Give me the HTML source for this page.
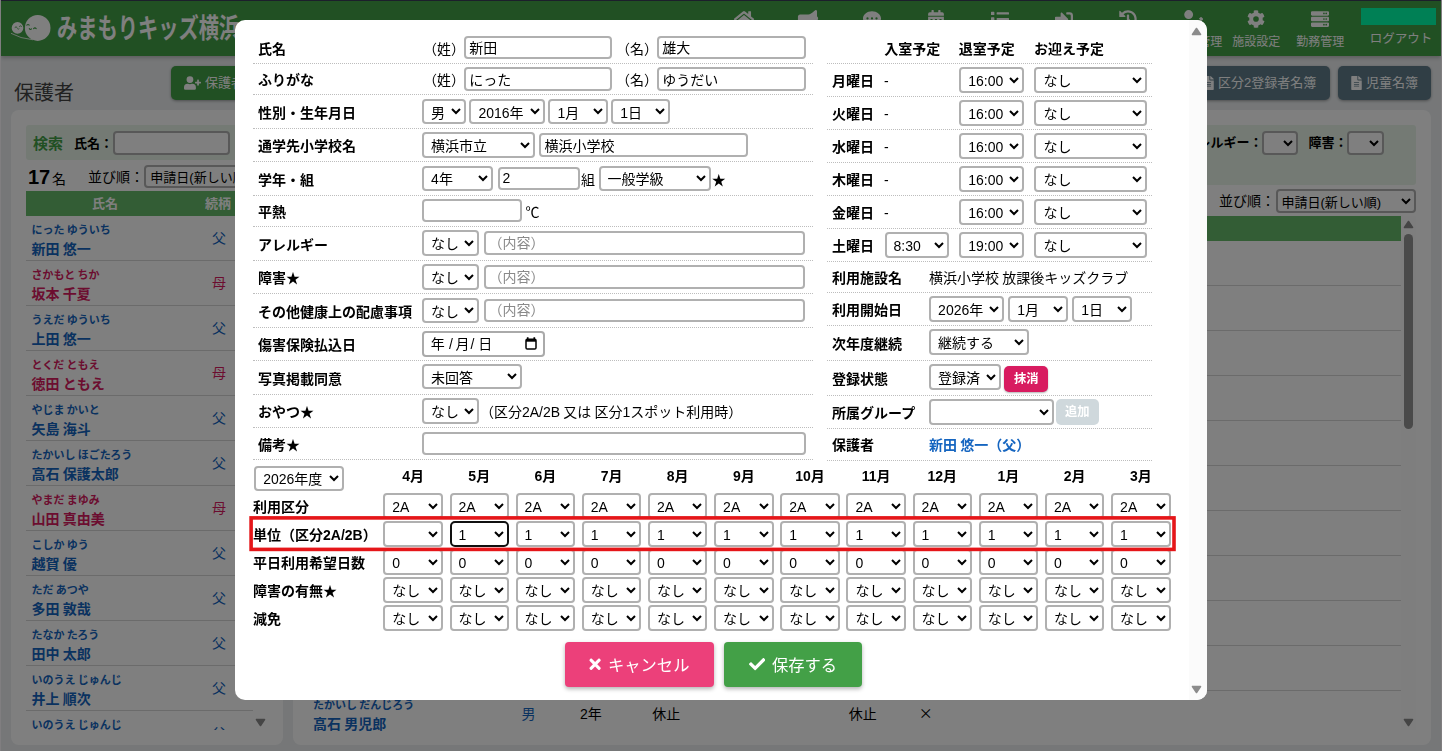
<!DOCTYPE html>
<html lang="ja"><head><meta charset="utf-8"><title>みまもりキッズ横浜</title>
<style>
*{box-sizing:border-box}
html,body{margin:0;padding:0}
body{width:1442px;height:751px;overflow:hidden;position:relative;background:#eceff1;font-family:"Liberation Sans","Noto Sans CJK JP",sans-serif;font-size:14px;color:#000;word-spacing:-0.054em}
.a{position:absolute}
.t{position:absolute;white-space:nowrap;line-height:20px;height:20px;font-size:14px}
.b{font-weight:bold}
select.s{position:absolute;font-family:"Liberation Sans","Noto Sans CJK JP",sans-serif;font-size:14px;border:2px solid #b0b0b0;border-radius:4px;background:#fff;color:#000;padding:2px 0 0 0;margin:0}
input.i{position:absolute;font-family:"Liberation Sans","Noto Sans CJK JP",sans-serif;font-size:14px;border:2px solid #b0b0b0;border-radius:4px;background:#fff;color:#000;padding:0 2px 0 3px;margin:0;outline:none}
input.i::placeholder{color:#8a8a8a;opacity:1}
.dl{position:absolute;height:0;border-top:1px dotted #bdbdbd}
.hdr{position:absolute;left:1px;top:1px;width:1440px;height:55px;background:#43a047;box-shadow:0 2px 4px rgba(0,0,0,.22)}
.nav{position:absolute;top:0;width:64px;height:55px;color:#fff;text-align:center}
.nav svg{position:absolute;left:50%;top:9.700px;transform:translateX(-50%) scale(1.06);transform-origin:50% 0;fill:#fff}
.nav span{position:absolute;left:-10px;right:-10px;top:33.4px;font-size:12px;line-height:18px;white-space:nowrap}
.card{position:absolute;background:#fff;border-radius:8px}
.btn{position:absolute;border-radius:5px;color:#fff;box-shadow:0 1px 3px rgba(0,0,0,.35)}
.row{position:absolute;border-bottom:1px solid #d6d6d6;height:45px}
.f{position:absolute;font-size:11px;font-weight:bold;line-height:14px;white-space:nowrap}
.n{position:absolute;font-size:14px;font-weight:bold;line-height:20px;white-space:nowrap}
.bl{color:#1565c0}
.pk{color:#d81b60}
</style></head><body>
<div id="page" class="a" style="left:0;top:0;width:1442px;height:751px">
<div class="hdr"></div>
<svg class="a" style="left:8px;top:10px" width="48" height="36" viewBox="8 10 48 36"><path d="M11 33.300Q20 38.500 33 39.800" stroke="#fff" stroke-width="1" fill="none" opacity=".8"/><ellipse cx="37.700" cy="27.900" rx="12.800" ry="13" fill="#fff"/><circle cx="17.500" cy="27.900" r="5.800" fill="#fff"/><g stroke="#43a047" stroke-width="1.100" fill="none" stroke-linecap="round"><path d="M26.800 25.200q1.200-1.300 2.400 0"/><path d="M33.600 28.600q1.300-1.400 2.600 0"/><path d="M29.300 28.600q1 1.600 2.200 .3"/><path d="M15 27.300q1-1.200 2 0" stroke-width=".9"/><path d="M19.500 26.300q1-1.200 2 0" stroke-width=".9"/><path d="M17.500 28.800q.8 1 1.600 0" stroke-width=".8"/></g></svg>
<div class="a" style="left:56.500px;top:12px;font-size:27px;line-height:34px;font-weight:bold;color:#fff;white-space:nowrap;transform:scaleX(.75);transform-origin:0 0">みまもりキッズ横浜</div>
<div class="nav" style="left:712.3px"><svg width="20" height="17" viewBox="0 0 576 512"><path d="M280 148L96 300v164a16 16 0 0 0 16 16l112-.3a16 16 0 0 0 16-16V368a16 16 0 0 1 16-16h64a16 16 0 0 1 16 16v95.600a16 16 0 0 0 16 16l112 .3a16 16 0 0 0 16-16V300L296 148a12 12 0 0 0-16 0zM572 251l-84-69V44a12 12 0 0 0-12-12h-56a12 12 0 0 0-12 12v73l-89-74a48 48 0 0 0-61 0L4 251a12 12 0 0 0-2 17l26 31a12 12 0 0 0 17 2L280 107a12 12 0 0 1 16 0l235 194a12 12 0 0 0 17-2l26-31a12 12 0 0 0-2-17z"/></svg><span>ホーム</span></div>
<div class="nav" style="left:776.3px"><svg width="20" height="17" viewBox="0 0 576 512"><path d="M576 240c0-24-13-44-32-55V32c0-9-7-32-32-32a32 32 0 0 0-20 7l-85 68C364 109 310 128 256 128H64c-35 0-64 29-64 64v96c0 35 29 64 64 64h34a247 247 0 0 0-2 32c0 40 9 77 26 111 5 10 16 17 28 17h74c26 0 42-30 26-51-16-21-26-48-26-77 0-11 2-22 4-32h28c54 0 108 19 151 53l85 68a32 32 0 0 0 20 7c25 0 32-23 32-32V295c19-11 32-31 32-55z"/></svg><span>お知らせ</span></div>
<div class="nav" style="left:840.3px"><svg width="18" height="17" viewBox="0 0 512 512"><path d="M256 32C115 32 0 125 0 240c0 50 21 95 57 131-12 50-54 95-55 95a8 8 0 0 0-1 9 8 8 0 0 0 7 5c66 0 116-32 140-51a305 305 0 0 0 108 19c141 0 256-93 256-208S397 32 256 32zM128 272a32 32 0 1 1 0-64 32 32 0 0 1 0 64zm128 0a32 32 0 1 1 0-64 32 32 0 0 1 0 64zm128 0a32 32 0 1 1 0-64 32 32 0 0 1 0 64z"/></svg><span>連絡帳</span></div>
<div class="nav" style="left:904.3px"><svg width="16" height="17" viewBox="0 0 448 512"><path d="M0 464a48 48 0 0 0 48 48h352a48 48 0 0 0 48-48V192H0zM64 268a12 12 0 0 1 12-12h40a12 12 0 0 1 12 12v40a12 12 0 0 1-12 12H76a12 12 0 0 1-12-12zm128 0a12 12 0 0 1 12-12h40a12 12 0 0 1 12 12v40a12 12 0 0 1-12 12h-40a12 12 0 0 1-12-12zm128 0a12 12 0 0 1 12-12h40a12 12 0 0 1 12 12v40a12 12 0 0 1-12 12h-40a12 12 0 0 1-12-12zM400 64h-48V16a16 16 0 0 0-16-16h-32a16 16 0 0 0-16 16v48H160V16a16 16 0 0 0-16-16h-32a16 16 0 0 0-16 16v48H48A48 48 0 0 0 0 112v48h448v-48a48 48 0 0 0-48-48z"/></svg><span>出欠予定</span></div>
<div class="nav" style="left:968.3px"><svg width="18" height="17" viewBox="0 0 512 512"><path d="M80 48H16A16 16 0 0 0 0 64v64a16 16 0 0 0 16 16h64a16 16 0 0 0 16-16V64a16 16 0 0 0-16-16zm0 160H16a16 16 0 0 0-16 16v64a16 16 0 0 0 16 16h64a16 16 0 0 0 16-16v-64a16 16 0 0 0-16-16zm0 160H16a16 16 0 0 0-16 16v64a16 16 0 0 0 16 16h64a16 16 0 0 0 16-16v-64a16 16 0 0 0-16-16zM496 64H176a16 16 0 0 0-16 16v32a16 16 0 0 0 16 16h320a16 16 0 0 0 16-16V80a16 16 0 0 0-16-16zm0 160H176a16 16 0 0 0-16 16v32a16 16 0 0 0 16 16h320a16 16 0 0 0 16-16v-32a16 16 0 0 0-16-16zm0 160H176a16 16 0 0 0-16 16v32a16 16 0 0 0 16 16h320a16 16 0 0 0 16-16v-32a16 16 0 0 0-16-16z"/></svg><span>入退室一覧</span></div>
<div class="nav" style="left:1032.3px"><svg width="18" height="17" viewBox="0 0 512 512"><path d="M416 448h-84a12 12 0 0 1-12-12v-40a12 12 0 0 1 12-12h84a32 32 0 0 0 32-32V160a32 32 0 0 0-32-32h-84a12 12 0 0 1-12-12V76a12 12 0 0 1 12-12h84a96 96 0 0 1 96 96v192a96 96 0 0 1-96 96zm-47-201L201 79c-15-15-41-4-41 17v96H24a24 24 0 0 0-24 24v96a24 24 0 0 0 24 24h136v96c0 21 26 32 41 17l168-168a24 24 0 0 0 0-34z"/></svg><span>入退室</span></div>
<div class="nav" style="left:1096.3px"><svg width="18" height="17" viewBox="0 0 512 512"><path d="M504 255.500C504.300 392 392.800 503.900 256.200 504a247 247 0 0 1-156-55c-11-9-12-26-2-36l11-11c9-9 22-9 32-2A184 184 0 0 0 256 440c102 0 184-82 184-184S358 72 256 72a183 183 0 0 0-127 51l51 51c10 10 3 27-11 27H24a16 16 0 0 1-16-16V40c0-14 17-21 27-11l49 49A247 247 0 0 1 256 8c137 0 248 111 248 247.500zM323 334l10-13a24 24 0 0 0-4-33l-41-32V152a24 24 0 0 0-24-24h-16a24 24 0 0 0-24 24v136l65 51a24 24 0 0 0 34-5z"/></svg><span>利用履歴</span></div>
<div class="nav" style="left:1160.3px"><svg width="21" height="17" viewBox="0 0 640 512"><path d="M224 256a128 128 0 1 0 0-256 128 128 0 0 0 0 256zm90 32h-17a174 174 0 0 1-146 0h-17A134 134 0 0 0 0 422v42a48 48 0 0 0 48 48h274a48 48 0 0 1-2-20l7-61 1-11 8-8 77-77a132 132 0 0 0-99-47zm45 147l-7 61a14 14 0 0 0 16 16l61-7 138-138-70-70zm274-194l-37-37a24 24 0 0 0-34 0l-37 37-4 4 70 70 41-41a24 24 0 0 0 0-34z"/></svg><span>利用者管理</span></div>
<div class="nav" style="left:1224.3px"><svg width="18" height="17" viewBox="0 0 512 512"><path d="M487 316l-43-25a193 193 0 0 0 0-70l43-25a12 12 0 0 0 6-14 249 249 0 0 0-55-95 12 12 0 0 0-15-2l-43 25a189 189 0 0 0-61-35V25a12 12 0 0 0-9-12 251 251 0 0 0-109 0 12 12 0 0 0-9 12v50a195 195 0 0 0-61 35L89 85a12 12 0 0 0-15 2 249 249 0 0 0-55 95 12 12 0 0 0 6 14l43 25a193 193 0 0 0 0 70l-43 25a12 12 0 0 0-6 14 249 249 0 0 0 55 95 12 12 0 0 0 15 2l43-25a189 189 0 0 0 61 35v50a12 12 0 0 0 9 12 251 251 0 0 0 109 0 12 12 0 0 0 9-12v-50a195 195 0 0 0 61-35l43 25a12 12 0 0 0 15-2 249 249 0 0 0 55-95 12 12 0 0 0-6-14zM256 336a80 80 0 1 1 0-160 80 80 0 0 1 0 160z"/></svg><span>施設設定</span></div>
<div class="nav" style="left:1288.3px"><svg width="18" height="17" viewBox="0 0 512 512"><path d="M480 160H32a32 32 0 0 1-32-32V64a32 32 0 0 1 32-32h448a32 32 0 0 1 32 32v64a32 32 0 0 1-32 32zm-48-88a24 24 0 1 0 0 48 24 24 0 0 0 0-48zm-64 0a24 24 0 1 0 0 48 24 24 0 0 0 0-48zm112 248H32a32 32 0 0 1-32-32v-64a32 32 0 0 1 32-32h448a32 32 0 0 1 32 32v64a32 32 0 0 1-32 32zm-48-88a24 24 0 1 0 0 48 24 24 0 0 0 0-48zm-64 0a24 24 0 1 0 0 48 24 24 0 0 0 0-48zm112 248H32a32 32 0 0 1-32-32v-64a32 32 0 0 1 32-32h448a32 32 0 0 1 32 32v64a32 32 0 0 1-32 32zm-48-88a24 24 0 1 0 0 48 24 24 0 0 0 0-48zm-64 0a24 24 0 1 0 0 48 24 24 0 0 0 0-48z"/></svg><span>勤務管理</span></div>
<div class="t" style="left:1369.800px;top:29px;color:#fff;font-size:12.500px">ログアウト</div>
<div class="a" style="left:14px;top:77.500px;font-size:20px;line-height:30px;color:#424242;white-space:nowrap">保護者</div>
<div class="btn" style="left:171px;top:66px;width:110px;height:34px;background:#43a047"><svg class="a" style="left:13px;top:10px;fill:#fff" width="17" height="14" viewBox="0 0 640 512"><path d="M624 208h-64v-64a16 16 0 0 0-16-16h-32a16 16 0 0 0-16 16v64h-64a16 16 0 0 0-16 16v32a16 16 0 0 0 16 16h64v64a16 16 0 0 0 16 16h32a16 16 0 0 0 16-16v-64h64a16 16 0 0 0 16-16v-32a16 16 0 0 0-16-16zm-400 48a128 128 0 1 0 0-256 128 128 0 0 0 0 256zm90 32h-17a174 174 0 0 1-146 0h-17A134 134 0 0 0 0 422v42a48 48 0 0 0 48 48h352a48 48 0 0 0 48-48v-42a134 134 0 0 0-134-134z"/></svg><span class="t" style="left:34px;top:7px;font-size:13px">保護者登録</span></div>
<div class="btn" style="left:1190px;top:66px;width:140px;height:34px;background:#607d8b"><svg class="a" style="left:13px;top:10px;fill:#fff" width="11" height="14" viewBox="0 0 384 512"><path d="M224 136V0H24A24 24 0 0 0 0 24v464a24 24 0 0 0 24 24h336a24 24 0 0 0 24-24V160H248a24 24 0 0 1-24-24zm64 236a12 12 0 0 1-12 12H108a12 12 0 0 1-12-12v-8a12 12 0 0 1 12-12h168a12 12 0 0 1 12 12zm0-64a12 12 0 0 1-12 12H108a12 12 0 0 1-12-12v-8a12 12 0 0 1 12-12h168a12 12 0 0 1 12 12zm0-72v8a12 12 0 0 1-12 12H108a12 12 0 0 1-12-12v-8a12 12 0 0 1 12-12h168a12 12 0 0 1 12 12zm96-114v6H256V0h6a24 24 0 0 1 17 7l98 98a24 24 0 0 1 7 17z"/></svg><span class="t" style="left:28px;top:7px;font-size:13px">区分2登録者名簿</span></div>
<div class="btn" style="left:1338px;top:66px;width:93px;height:34px;background:#607d8b"><svg class="a" style="left:13px;top:10px;fill:#fff" width="11" height="14" viewBox="0 0 384 512"><path d="M224 136V0H24A24 24 0 0 0 0 24v464a24 24 0 0 0 24 24h336a24 24 0 0 0 24-24V160H248a24 24 0 0 1-24-24zm64 236a12 12 0 0 1-12 12H108a12 12 0 0 1-12-12v-8a12 12 0 0 1 12-12h168a12 12 0 0 1 12 12zm0-64a12 12 0 0 1-12 12H108a12 12 0 0 1-12-12v-8a12 12 0 0 1 12-12h168a12 12 0 0 1 12 12zm0-72v8a12 12 0 0 1-12 12H108a12 12 0 0 1-12-12v-8a12 12 0 0 1 12-12h168a12 12 0 0 1 12 12zm96-114v6H256V0h6a24 24 0 0 1 17 7l98 98a24 24 0 0 1 7 17z"/></svg><span class="t" style="left:28px;top:7px;font-size:13px">児童名簿</span></div>
<div class="card" style="left:11px;top:110px;width:271.500px;height:635px"></div>
<div class="a" style="left:26px;top:125px;width:242px;height:35px;background:#e8f5e9;border-radius:3px"></div>
<span class="t b" style="left:33px;top:134.0px;color:#43a047;font-size:15px">検索</span>
<span class="t b" style="left:74px;top:134.0px;font-size:13px">氏名：</span>
<input class="i" type="text" style="left:113px;top:130.6px;width:117px;height:24px;">
<span class="t b" style="left:28px;top:164px;font-size:20px;line-height:26px;height:26px">17</span>
<span class="t " style="left:52px;top:169.0px;">名</span>
<span class="t " style="left:88px;top:167.0px;">並び順：</span>
<select class="s" style="left:144.3px;top:164.7px;width:125px;height:23.6px;padding-left:0px;font-size:13px;"><option>申請日(新しい順)</option></select>
<div class="a" style="left:26px;top:191px;width:227px;height:25px;background:#66bb6a"></div>
<span class="t b" style="left:92px;top:194.0px;color:#fff;font-size:13px">氏名</span>
<span class="t b" style="left:205px;top:194.0px;color:#fff;font-size:13px">続柄</span>
<div class="a" style="left:26px;top:216px;width:227px;height:514px;overflow:hidden">
<div class="row bl" style="left:0;top:-0.5px;width:227px"><span class="f" style="left:5.500px;top:7.300px">にった ゆういち</span><span class="n" style="left:5.500px;top:23px">新田 悠一</span><span class="t" style="left:186px;top:12.500px">父</span></div>
<div class="row pk" style="left:0;top:44.5px;width:227px"><span class="f" style="left:5.500px;top:7.300px">さかもと ちか</span><span class="n" style="left:5.500px;top:23px">坂本 千夏</span><span class="t" style="left:186px;top:12.500px">母</span></div>
<div class="row bl" style="left:0;top:89.5px;width:227px"><span class="f" style="left:5.500px;top:7.300px">うえだ ゆういち</span><span class="n" style="left:5.500px;top:23px">上田 悠一</span><span class="t" style="left:186px;top:12.500px">父</span></div>
<div class="row pk" style="left:0;top:134.5px;width:227px"><span class="f" style="left:5.500px;top:7.300px">とくだ ともえ</span><span class="n" style="left:5.500px;top:23px">徳田 ともえ</span><span class="t" style="left:186px;top:12.500px">母</span></div>
<div class="row bl" style="left:0;top:179.5px;width:227px"><span class="f" style="left:5.500px;top:7.300px">やじま かいと</span><span class="n" style="left:5.500px;top:23px">矢島 海斗</span><span class="t" style="left:186px;top:12.500px">父</span></div>
<div class="row bl" style="left:0;top:224.5px;width:227px"><span class="f" style="left:5.500px;top:7.300px">たかいし ほごたろう</span><span class="n" style="left:5.500px;top:23px">高石 保護太郎</span><span class="t" style="left:186px;top:12.500px">父</span></div>
<div class="row pk" style="left:0;top:269.5px;width:227px"><span class="f" style="left:5.500px;top:7.300px">やまだ まゆみ</span><span class="n" style="left:5.500px;top:23px">山田 真由美</span><span class="t" style="left:186px;top:12.500px">母</span></div>
<div class="row bl" style="left:0;top:314.5px;width:227px"><span class="f" style="left:5.500px;top:7.300px">こしか ゆう</span><span class="n" style="left:5.500px;top:23px">越賀 優</span><span class="t" style="left:186px;top:12.500px">父</span></div>
<div class="row bl" style="left:0;top:359.5px;width:227px"><span class="f" style="left:5.500px;top:7.300px">ただ あつや</span><span class="n" style="left:5.500px;top:23px">多田 敦哉</span><span class="t" style="left:186px;top:12.500px">父</span></div>
<div class="row bl" style="left:0;top:404.5px;width:227px"><span class="f" style="left:5.500px;top:7.300px">たなか たろう</span><span class="n" style="left:5.500px;top:23px">田中 太郎</span><span class="t" style="left:186px;top:12.500px">父</span></div>
<div class="row bl" style="left:0;top:449.5px;width:227px"><span class="f" style="left:5.500px;top:7.300px">いのうえ じゅんじ</span><span class="n" style="left:5.500px;top:23px">井上 順次</span><span class="t" style="left:186px;top:12.500px">父</span></div>
<div class="row bl" style="left:0;top:494.5px;width:227px"><span class="f" style="left:5.500px;top:7.300px">いのうえ じゅんじ</span><span class="n" style="left:5.500px;top:23px">井上 順次</span><span class="t" style="left:186px;top:12.500px">父</span></div>
</div>
<svg class="a" style="left:255px;top:718px" width="11" height="9" viewBox="0 0 11 9"><path d="M1.500 1.500h8L5.500 7.500z" fill="#8a8a8a" stroke="#8a8a8a" stroke-width="1.600" stroke-linejoin="round"/></svg>
<div class="card" style="left:293px;top:110px;width:1138px;height:635px"></div>
<div class="a" style="left:308px;top:125px;width:1108px;height:60px;background:#e8f5e9;border-radius:3px"></div>
<span class="t b" style="left:1184.5px;top:133.0px;font-size:13px">アレルギー：</span>
<select class="s" style="left:1262px;top:131px;width:36px;height:23.5px;padding-left:0px;"><option></option></select>
<span class="t b" style="left:1308.4px;top:133.0px;font-size:13px">障害：</span>
<select class="s" style="left:1347px;top:131px;width:36.5px;height:23.5px;padding-left:0px;"><option></option></select>
<span class="t " style="left:1219px;top:191.0px;">並び順：</span>
<select class="s" style="left:1275.5px;top:189.3px;width:140.2px;height:23.8px;padding-left:0px;font-size:13px;"><option>申請日(新しい順)</option></select>
<div class="a" style="left:308px;top:216px;width:1093px;height:24.600px;background:#66bb6a"></div>
<div class="a" style="left:308px;top:285.1px;width:1093px;height:1px;background:#d6d6d6"></div>
<div class="a" style="left:308px;top:330.1px;width:1093px;height:1px;background:#d6d6d6"></div>
<div class="a" style="left:308px;top:375.1px;width:1093px;height:1px;background:#d6d6d6"></div>
<div class="a" style="left:308px;top:420.1px;width:1093px;height:1px;background:#d6d6d6"></div>
<div class="a" style="left:308px;top:465.1px;width:1093px;height:1px;background:#d6d6d6"></div>
<div class="a" style="left:308px;top:510.1px;width:1093px;height:1px;background:#d6d6d6"></div>
<div class="a" style="left:308px;top:555.1px;width:1093px;height:1px;background:#d6d6d6"></div>
<div class="a" style="left:308px;top:600.1px;width:1093px;height:1px;background:#d6d6d6"></div>
<div class="a" style="left:308px;top:645.1px;width:1093px;height:1px;background:#d6d6d6"></div>
<div class="a" style="left:308px;top:690.1px;width:1093px;height:1px;background:#d6d6d6"></div>
<span class="f bl" style="left:313px;top:698px">たかいし だんじろう</span>
<span class="n bl" style="left:313px;top:713.500px">高石 男児郎</span>
<span class="t bl" style="left:521.5px;top:703.5px;">男</span>
<span class="t " style="left:580px;top:703.5px;">2年</span>
<span class="t " style="left:652.3px;top:703.5px;">休止</span>
<span class="t " style="left:848.8px;top:703.5px;">休止</span>
<span class="t " style="left:918.7px;top:702.0px;font-family:'Noto Sans CJK JP',sans-serif">×</span>
<div class="a" style="left:1401px;top:216px;width:15px;height:514px;background:#fdfdfd"></div>
<svg class="a" style="left:1403px;top:220px" width="11" height="9" viewBox="0 0 11 9"><path d="M1.500 7.500h8L5.500 1.500z" fill="#8a8a8a" stroke="#8a8a8a" stroke-width="1.600" stroke-linejoin="round"/></svg>
<div class="a" style="left:1404px;top:234px;width:9px;height:195px;border-radius:4.500px;background:#959595"></div>
<svg class="a" style="left:1403px;top:718px" width="11" height="9" viewBox="0 0 11 9"><path d="M1.500 1.500h8L5.500 7.500z" fill="#8a8a8a" stroke="#8a8a8a" stroke-width="1.600" stroke-linejoin="round"/></svg>
</div>
<div class="a" style="left:0;top:0;width:1442px;height:751px;background:rgba(0,0,0,.5)"></div>
<div class="a" style="left:1361px;top:8px;width:75px;height:17px;background:#008055"></div>
<div id="modal" class="a" style="left:0;top:0;width:1442px;height:751px;will-change:transform">
<div class="a" style="left:235px;top:20px;width:972px;height:680px;background:#fff;border-radius:10px"></div>
<div class="a" style="left:1189px;top:20px;width:18px;height:680px;background:#fbfbfb;border-radius:0 10px 10px 0"></div>
<svg class="a" style="left:1191px;top:27px" width="11" height="9" viewBox="0 0 11 9"><path d="M1.500 7.500h8L5.500 1.500z" fill="#8c8c8c" stroke="#8c8c8c" stroke-width="1.600" stroke-linejoin="round"/></svg>
<svg class="a" style="left:1191px;top:685px" width="11" height="9" viewBox="0 0 11 9"><path d="M1.500 1.500h8L5.500 7.500z" fill="#8c8c8c" stroke="#8c8c8c" stroke-width="1.600" stroke-linejoin="round"/></svg>
<div class="dl" style="left:253px;top:63px;width:560px"></div>
<div class="dl" style="left:253px;top:94px;width:560px"></div>
<div class="dl" style="left:253px;top:128px;width:560px"></div>
<div class="dl" style="left:253px;top:161px;width:560px"></div>
<div class="dl" style="left:253px;top:195px;width:560px"></div>
<div class="dl" style="left:253px;top:226px;width:560px"></div>
<div class="dl" style="left:253px;top:260px;width:560px"></div>
<div class="dl" style="left:253px;top:293px;width:560px"></div>
<div class="dl" style="left:253px;top:327px;width:560px"></div>
<div class="dl" style="left:253px;top:360px;width:560px"></div>
<div class="dl" style="left:253px;top:394px;width:560px"></div>
<div class="dl" style="left:253px;top:427px;width:560px"></div>
<div class="dl" style="left:253px;top:459px;width:560px"></div>
<span class="t b" style="left:258px;top:38.8px;">氏名</span>
<span class="t b" style="left:258px;top:70.4px;">ふりがな</span>
<span class="t b" style="left:258px;top:102.9px;">性別・生年月日</span>
<span class="t b" style="left:258px;top:136.3px;">通学先小学校名</span>
<span class="t b" style="left:258px;top:169.8px;">学年・組</span>
<span class="t b" style="left:258px;top:202.1px;">平熱</span>
<span class="t b" style="left:258px;top:234.6px;">アレルギー</span>
<span class="t b" style="left:258px;top:268.4px;">障害★</span>
<span class="t b" style="left:258px;top:301.9px;">その他健康上の配慮事項</span>
<span class="t b" style="left:258px;top:335.2px;">傷害保険払込日</span>
<span class="t b" style="left:258px;top:368.8px;">写真掲載同意</span>
<span class="t b" style="left:258px;top:402.2px;">おやつ★</span>
<span class="t b" style="left:258px;top:434.7px;">備考★</span>
<span class="t " style="left:423px;top:38.8px;">（姓）</span>
<input class="i" type="text" style="left:464.2px;top:35.6px;width:147.6px;height:23.6px;" value="新田">
<span class="t " style="left:616px;top:38.8px;">（名）</span>
<input class="i" type="text" style="left:657.3px;top:35.6px;width:148.6px;height:23.6px;" value="雄大">
<span class="t " style="left:423px;top:70.4px;">（姓）</span>
<input class="i" type="text" style="left:464.2px;top:67.2px;width:147.6px;height:23.6px;" value="にった">
<span class="t " style="left:616px;top:70.4px;">（名）</span>
<input class="i" type="text" style="left:657.3px;top:67.2px;width:148.6px;height:23.6px;" value="ゆうだい">
<select class="s" style="left:422.1px;top:98.7px;width:43.6px;height:25.7px;padding-left:3px;"><option>男</option></select>
<select class="s" style="left:469.4px;top:98.7px;width:75.2px;height:25.7px;padding-left:3px;"><option>2016年</option></select>
<select class="s" style="left:548.4px;top:98.7px;width:59.2px;height:25.7px;padding-left:3px;"><option>1月</option></select>
<select class="s" style="left:611.3px;top:98.7px;width:59.2px;height:25.7px;padding-left:3px;"><option>1日</option></select>
<select class="s" style="left:422.1px;top:132.1px;width:112.5px;height:25.7px;padding-left:3px;"><option>横浜市立</option></select>
<input class="i" type="text" style="left:539.4px;top:133.2px;width:208.6px;height:23.6px;" value="横浜小学校">
<select class="s" style="left:422.1px;top:165.6px;width:71.3px;height:25.7px;padding-left:3px;"><option>4年</option></select>
<input class="i" type="text" style="left:497.5px;top:166.6px;width:82.8px;height:23.6px;" value="2">
<span class="t " style="left:581px;top:169.8px;">組</span>
<select class="s" style="left:598.6px;top:165.6px;width:112.9px;height:25.7px;padding-left:3px;"><option>一般学級</option></select>
<span class="t " style="left:711.7px;top:169.8px;">★</span>
<input class="i" type="text" style="left:422.3px;top:198.9px;width:100.2px;height:23.6px;">
<span class="t " style="left:525.5px;top:202.1px;">℃</span>
<select class="s" style="left:422.1px;top:230.4px;width:57px;height:25.7px;padding-left:3px;"><option>なし</option></select>
<input class="i" type="text" style="left:483.5px;top:231.4px;width:321px;height:23.6px;" placeholder="（内容）">
<select class="s" style="left:422.1px;top:264.2px;width:57px;height:25.7px;padding-left:3px;"><option>なし</option></select>
<input class="i" type="text" style="left:483.5px;top:265.2px;width:321px;height:23.6px;" placeholder="（内容）">
<select class="s" style="left:422.1px;top:297.7px;width:57px;height:25.7px;padding-left:3px;"><option>なし</option></select>
<input class="i" type="text" style="left:483.5px;top:298.7px;width:321px;height:23.6px;" placeholder="（内容）">
<div class="a" style="left:422.300px;top:331.300px;width:122.300px;height:25.300px;border:2px solid #aaa;border-radius:4px;background:#fff"><span class="t" style="left:6.500px;top:0.700px">年</span><span class="t" style="left:24.800px;top:0.700px">/</span><span class="t" style="left:31.300px;top:0.700px">月</span><span class="t" style="left:46.300px;top:0.700px">/</span><span class="t" style="left:54px;top:0.700px">日</span><svg class="a" style="left:101px;top:3.700px" width="12" height="13" viewBox="0 0 12 13"><path d="M2.700 0.300v2.500M9.300 0.300v2.500" stroke="#000" stroke-width="1.700"/><rect x="1" y="2.300" width="10" height="9.700" rx="1.300" fill="none" stroke="#000" stroke-width="1.500"/><rect x="1" y="2.300" width="10" height="2.400" fill="#000"/></svg></div>
<select class="s" style="left:422.1px;top:364.3px;width:99.6px;height:25.2px;padding-left:3px;"><option>未回答</option></select>
<select class="s" style="left:422.1px;top:398.0px;width:57px;height:25.7px;padding-left:3px;"><option>なし</option></select>
<span class="t " style="left:480px;top:402.2px;">（区分2A/2B 又は 区分1スポット利用時）</span>
<input class="i" type="text" style="left:422.3px;top:431.6px;width:384px;height:23.6px;">
<div class="dl" style="left:827px;top:63px;width:325px"></div>
<div class="dl" style="left:827px;top:96px;width:325px"></div>
<div class="dl" style="left:827px;top:129px;width:325px"></div>
<div class="dl" style="left:827px;top:162px;width:325px"></div>
<div class="dl" style="left:827px;top:195px;width:325px"></div>
<div class="dl" style="left:827px;top:228px;width:325px"></div>
<div class="dl" style="left:827px;top:261px;width:325px"></div>
<div class="dl" style="left:827px;top:292px;width:325px"></div>
<div class="dl" style="left:827px;top:325px;width:325px"></div>
<div class="dl" style="left:827px;top:360px;width:325px"></div>
<div class="dl" style="left:827px;top:395px;width:325px"></div>
<div class="dl" style="left:827px;top:428px;width:325px"></div>
<div class="dl" style="left:827px;top:460px;width:325px"></div>
<span class="t b" style="left:884.3px;top:38.8px;">入室予定</span>
<span class="t b" style="left:958.7px;top:38.8px;">退室予定</span>
<span class="t b" style="left:1034px;top:38.8px;">お迎え予定</span>
<span class="t b" style="left:832px;top:70.9px;">月曜日</span>
<span class="t " style="left:884px;top:70.9px;">-</span>
<select class="s" style="left:959.2px;top:67.3px;width:64.4px;height:25.7px;padding-left:3px;"><option>16:00</option></select>
<select class="s" style="left:1034.4px;top:67.3px;width:112.3px;height:25.7px;padding-left:3px;"><option>なし</option></select>
<span class="t b" style="left:832px;top:103.9px;">火曜日</span>
<span class="t " style="left:884px;top:103.9px;">-</span>
<select class="s" style="left:959.2px;top:100.3px;width:64.4px;height:25.7px;padding-left:3px;"><option>16:00</option></select>
<select class="s" style="left:1034.4px;top:100.3px;width:112.3px;height:25.7px;padding-left:3px;"><option>なし</option></select>
<span class="t b" style="left:832px;top:136.9px;">水曜日</span>
<span class="t " style="left:884px;top:136.9px;">-</span>
<select class="s" style="left:959.2px;top:133.3px;width:64.4px;height:25.7px;padding-left:3px;"><option>16:00</option></select>
<select class="s" style="left:1034.4px;top:133.3px;width:112.3px;height:25.7px;padding-left:3px;"><option>なし</option></select>
<span class="t b" style="left:832px;top:169.9px;">木曜日</span>
<span class="t " style="left:884px;top:169.9px;">-</span>
<select class="s" style="left:959.2px;top:166.4px;width:64.4px;height:25.7px;padding-left:3px;"><option>16:00</option></select>
<select class="s" style="left:1034.4px;top:166.4px;width:112.3px;height:25.7px;padding-left:3px;"><option>なし</option></select>
<span class="t b" style="left:832px;top:202.9px;">金曜日</span>
<span class="t " style="left:884px;top:202.9px;">-</span>
<select class="s" style="left:959.2px;top:199.4px;width:64.4px;height:25.7px;padding-left:3px;"><option>16:00</option></select>
<select class="s" style="left:1034.4px;top:199.4px;width:112.3px;height:25.7px;padding-left:3px;"><option>なし</option></select>
<span class="t b" style="left:832px;top:235.9px;">土曜日</span>
<select class="s" style="left:884.5px;top:232.4px;width:64.2px;height:25.7px;padding-left:3px;"><option>8:30</option></select>
<select class="s" style="left:959.2px;top:232.4px;width:64.4px;height:25.7px;padding-left:3px;"><option>19:00</option></select>
<select class="s" style="left:1034.4px;top:232.4px;width:112.3px;height:25.7px;padding-left:3px;"><option>なし</option></select>
<span class="t b" style="left:832px;top:267.8px;">利用施設名</span>
<span class="t " style="left:929px;top:267.8px;">横浜小学校 放課後キッズクラブ</span>
<span class="t b" style="left:832px;top:299.8px;">利用開始日</span>
<select class="s" style="left:929.1px;top:296.1px;width:75.2px;height:25.7px;padding-left:3px;"><option>2026年</option></select>
<select class="s" style="left:1008.2px;top:296.1px;width:59.8px;height:25.7px;padding-left:3px;"><option>1月</option></select>
<select class="s" style="left:1072.2px;top:296.1px;width:59.8px;height:25.7px;padding-left:3px;"><option>1日</option></select>
<span class="t b" style="left:832px;top:333.8px;">次年度継続</span>
<select class="s" style="left:929.1px;top:329px;width:99.6px;height:25.7px;padding-left:3px;"><option>継続する</option></select>
<span class="t b" style="left:832px;top:368.7px;">登録状態</span>
<select class="s" style="left:929.1px;top:364.2px;width:71.5px;height:25.7px;padding-left:3px;"><option>登録済</option></select>
<div class="a" style="left:1004.200px;top:366px;width:43.700px;height:26px;background:#d81b60;border-radius:5px;box-shadow:0 1px 2px rgba(0,0,0,.3)"><span class="t b" style="left:9.800px;top:3.300px;color:#fff;font-size:12.300px">抹消</span></div>
<span class="t b" style="left:832px;top:402.8px;">所属グループ</span>
<select class="s" style="left:929.1px;top:399.3px;width:125.2px;height:25.7px;padding-left:3px;"><option></option></select>
<div class="a" style="left:1055.500px;top:399.300px;width:43.500px;height:25.500px;background:#cfd8dc;border-radius:5px"><span class="t b" style="left:9.500px;top:3px;color:#fff;font-size:12.300px">追加</span></div>
<span class="t b" style="left:832px;top:435.3px;">保護者</span>
<span class="t b" style="left:929px;top:435.3px;color:#1565c0">新田 悠一（父）</span>
<select class="s" style="left:254.2px;top:466px;width:89.6px;height:24.5px;padding-left:3px;"><option>2026年度</option></select>
<span class="t b" style="left:383.3px;top:466px;width:59.500px;text-align:center">4月</span>
<select class="s" style="left:383.3px;top:493.2px;width:59.5px;height:25.7px;padding-left:3px;"><option>2A</option></select>
<select class="s" style="left:383.3px;top:521.2px;width:59.5px;height:25.7px;padding-left:3px;"><option></option></select>
<select class="s" style="left:383.3px;top:549.2px;width:59.5px;height:25.7px;padding-left:3px;"><option>0</option></select>
<select class="s" style="left:383.3px;top:577.2px;width:59.5px;height:25.7px;padding-left:3px;"><option>なし</option></select>
<select class="s" style="left:383.3px;top:605.2px;width:59.5px;height:25.7px;padding-left:3px;"><option>なし</option></select>
<span class="t b" style="left:449.5px;top:466px;width:59.500px;text-align:center">5月</span>
<select class="s" style="left:449.5px;top:493.2px;width:59.5px;height:25.7px;padding-left:3px;"><option>2A</option></select>
<select class="s" style="left:449.5px;top:521.2px;width:59.5px;height:25.7px;padding-left:3px;border-color:#101010;border-radius:5px;"><option>1</option></select>
<select class="s" style="left:449.5px;top:549.2px;width:59.5px;height:25.7px;padding-left:3px;"><option>0</option></select>
<select class="s" style="left:449.5px;top:577.2px;width:59.5px;height:25.7px;padding-left:3px;"><option>なし</option></select>
<select class="s" style="left:449.5px;top:605.2px;width:59.5px;height:25.7px;padding-left:3px;"><option>なし</option></select>
<span class="t b" style="left:515.6px;top:466px;width:59.500px;text-align:center">6月</span>
<select class="s" style="left:515.6px;top:493.2px;width:59.5px;height:25.7px;padding-left:3px;"><option>2A</option></select>
<select class="s" style="left:515.6px;top:521.2px;width:59.5px;height:25.7px;padding-left:3px;"><option>1</option></select>
<select class="s" style="left:515.6px;top:549.2px;width:59.5px;height:25.7px;padding-left:3px;"><option>0</option></select>
<select class="s" style="left:515.6px;top:577.2px;width:59.5px;height:25.7px;padding-left:3px;"><option>なし</option></select>
<select class="s" style="left:515.6px;top:605.2px;width:59.5px;height:25.7px;padding-left:3px;"><option>なし</option></select>
<span class="t b" style="left:581.8px;top:466px;width:59.500px;text-align:center">7月</span>
<select class="s" style="left:581.8px;top:493.2px;width:59.5px;height:25.7px;padding-left:3px;"><option>2A</option></select>
<select class="s" style="left:581.8px;top:521.2px;width:59.5px;height:25.7px;padding-left:3px;"><option>1</option></select>
<select class="s" style="left:581.8px;top:549.2px;width:59.5px;height:25.7px;padding-left:3px;"><option>0</option></select>
<select class="s" style="left:581.8px;top:577.2px;width:59.5px;height:25.7px;padding-left:3px;"><option>なし</option></select>
<select class="s" style="left:581.8px;top:605.2px;width:59.5px;height:25.7px;padding-left:3px;"><option>なし</option></select>
<span class="t b" style="left:647.9px;top:466px;width:59.500px;text-align:center">8月</span>
<select class="s" style="left:647.9px;top:493.2px;width:59.5px;height:25.7px;padding-left:3px;"><option>2A</option></select>
<select class="s" style="left:647.9px;top:521.2px;width:59.5px;height:25.7px;padding-left:3px;"><option>1</option></select>
<select class="s" style="left:647.9px;top:549.2px;width:59.5px;height:25.7px;padding-left:3px;"><option>0</option></select>
<select class="s" style="left:647.9px;top:577.2px;width:59.5px;height:25.7px;padding-left:3px;"><option>なし</option></select>
<select class="s" style="left:647.9px;top:605.2px;width:59.5px;height:25.7px;padding-left:3px;"><option>なし</option></select>
<span class="t b" style="left:714.1px;top:466px;width:59.500px;text-align:center">9月</span>
<select class="s" style="left:714.1px;top:493.2px;width:59.5px;height:25.7px;padding-left:3px;"><option>2A</option></select>
<select class="s" style="left:714.1px;top:521.2px;width:59.5px;height:25.7px;padding-left:3px;"><option>1</option></select>
<select class="s" style="left:714.1px;top:549.2px;width:59.5px;height:25.7px;padding-left:3px;"><option>0</option></select>
<select class="s" style="left:714.1px;top:577.2px;width:59.5px;height:25.7px;padding-left:3px;"><option>なし</option></select>
<select class="s" style="left:714.1px;top:605.2px;width:59.5px;height:25.7px;padding-left:3px;"><option>なし</option></select>
<span class="t b" style="left:780.3px;top:466px;width:59.500px;text-align:center">10月</span>
<select class="s" style="left:780.3px;top:493.2px;width:59.5px;height:25.7px;padding-left:3px;"><option>2A</option></select>
<select class="s" style="left:780.3px;top:521.2px;width:59.5px;height:25.7px;padding-left:3px;"><option>1</option></select>
<select class="s" style="left:780.3px;top:549.2px;width:59.5px;height:25.7px;padding-left:3px;"><option>0</option></select>
<select class="s" style="left:780.3px;top:577.2px;width:59.5px;height:25.7px;padding-left:3px;"><option>なし</option></select>
<select class="s" style="left:780.3px;top:605.2px;width:59.5px;height:25.7px;padding-left:3px;"><option>なし</option></select>
<span class="t b" style="left:846.4px;top:466px;width:59.500px;text-align:center">11月</span>
<select class="s" style="left:846.4px;top:493.2px;width:59.5px;height:25.7px;padding-left:3px;"><option>2A</option></select>
<select class="s" style="left:846.4px;top:521.2px;width:59.5px;height:25.7px;padding-left:3px;"><option>1</option></select>
<select class="s" style="left:846.4px;top:549.2px;width:59.5px;height:25.7px;padding-left:3px;"><option>0</option></select>
<select class="s" style="left:846.4px;top:577.2px;width:59.5px;height:25.7px;padding-left:3px;"><option>なし</option></select>
<select class="s" style="left:846.4px;top:605.2px;width:59.5px;height:25.7px;padding-left:3px;"><option>なし</option></select>
<span class="t b" style="left:912.6px;top:466px;width:59.500px;text-align:center">12月</span>
<select class="s" style="left:912.6px;top:493.2px;width:59.5px;height:25.7px;padding-left:3px;"><option>2A</option></select>
<select class="s" style="left:912.6px;top:521.2px;width:59.5px;height:25.7px;padding-left:3px;"><option>1</option></select>
<select class="s" style="left:912.6px;top:549.2px;width:59.5px;height:25.7px;padding-left:3px;"><option>0</option></select>
<select class="s" style="left:912.6px;top:577.2px;width:59.5px;height:25.7px;padding-left:3px;"><option>なし</option></select>
<select class="s" style="left:912.6px;top:605.2px;width:59.5px;height:25.7px;padding-left:3px;"><option>なし</option></select>
<span class="t b" style="left:978.7px;top:466px;width:59.500px;text-align:center">1月</span>
<select class="s" style="left:978.7px;top:493.2px;width:59.5px;height:25.7px;padding-left:3px;"><option>2A</option></select>
<select class="s" style="left:978.7px;top:521.2px;width:59.5px;height:25.7px;padding-left:3px;"><option>1</option></select>
<select class="s" style="left:978.7px;top:549.2px;width:59.5px;height:25.7px;padding-left:3px;"><option>0</option></select>
<select class="s" style="left:978.7px;top:577.2px;width:59.5px;height:25.7px;padding-left:3px;"><option>なし</option></select>
<select class="s" style="left:978.7px;top:605.2px;width:59.5px;height:25.7px;padding-left:3px;"><option>なし</option></select>
<span class="t b" style="left:1044.9px;top:466px;width:59.500px;text-align:center">2月</span>
<select class="s" style="left:1044.9px;top:493.2px;width:59.5px;height:25.7px;padding-left:3px;"><option>2A</option></select>
<select class="s" style="left:1044.9px;top:521.2px;width:59.5px;height:25.7px;padding-left:3px;"><option>1</option></select>
<select class="s" style="left:1044.9px;top:549.2px;width:59.5px;height:25.7px;padding-left:3px;"><option>0</option></select>
<select class="s" style="left:1044.9px;top:577.2px;width:59.5px;height:25.7px;padding-left:3px;"><option>なし</option></select>
<select class="s" style="left:1044.9px;top:605.2px;width:59.5px;height:25.7px;padding-left:3px;"><option>なし</option></select>
<span class="t b" style="left:1111.1px;top:466px;width:59.500px;text-align:center">3月</span>
<select class="s" style="left:1111.1px;top:493.2px;width:59.5px;height:25.7px;padding-left:3px;"><option>2A</option></select>
<select class="s" style="left:1111.1px;top:521.2px;width:59.5px;height:25.7px;padding-left:3px;"><option>1</option></select>
<select class="s" style="left:1111.1px;top:549.2px;width:59.5px;height:25.7px;padding-left:3px;"><option>0</option></select>
<select class="s" style="left:1111.1px;top:577.2px;width:59.5px;height:25.7px;padding-left:3px;"><option>なし</option></select>
<select class="s" style="left:1111.1px;top:605.2px;width:59.5px;height:25.7px;padding-left:3px;"><option>なし</option></select>
<span class="t b" style="left:253px;top:497.0px;">利用区分</span>
<span class="t b" style="left:253px;top:525.0px;">単位（区分2A/2B）</span>
<span class="t b" style="left:253px;top:553.0px;">平日利用希望日数</span>
<span class="t b" style="left:253px;top:581.0px;">障害の有無★</span>
<span class="t b" style="left:253px;top:609.0px;">減免</span>
<svg class="a" style="left:245px;top:512px" width="940" height="44" viewBox="245 512 940 44"><rect x="251.100" y="517.900" width="922.900" height="31.500" fill="none" stroke="#e51619" stroke-width="3.600"/></svg>
<div class="a" style="left:565px;top:642px;width:149px;height:44.500px;background:#ec407a;border-radius:4px;box-shadow:0 2px 4px rgba(0,0,0,.3);color:#fff"><svg class="a" style="left:24.400px;top:14.400px;fill:#fff" width="12.200" height="16.500" viewBox="0 0 352 512"><path d="M242.720 256l100.070-100.070c12.280-12.280 12.280-32.190 0-44.480l-22.240-22.240c-12.280-12.280-32.190-12.280-44.480 0L176 189.280 75.930 89.210c-12.280-12.280-32.190-12.280-44.480 0L9.210 111.450c-12.280 12.280-12.280 32.190 0 44.480L109.280 256 9.210 356.070c-12.280 12.280-12.280 32.190 0 44.480l22.240 22.240c12.280 12.280 32.200 12.280 44.480 0L176 322.720l100.070 100.070c12.280 12.280 32.200 12.280 44.480 0l22.240-22.240c12.280-12.280 12.280-32.190 0-44.480L242.720 256z"/></svg><span class="t" style="left:43px;top:13px;font-size:16.300px">キャンセル</span></div>
<div class="a" style="left:724px;top:642px;width:138px;height:44.500px;background:#43a047;border-radius:4px;box-shadow:0 2px 4px rgba(0,0,0,.3);color:#fff"><svg class="a" style="left:24.500px;top:13.500px;fill:#fff" width="16.400" height="16.400" viewBox="0 0 512 512"><path d="M173.898 439.404l-166.400-166.400c-9.997-9.997-9.997-26.206 0-36.204l36.203-36.204c9.997-9.998 26.207-9.998 36.204 0L192 312.690 432.095 72.596c9.997-9.997 26.207-9.997 36.204 0l36.203 36.204c9.997 9.997 9.997 26.206 0 36.204l-294.400 294.401c-9.998 9.997-26.207 9.997-36.204-.001z"/></svg><span class="t" style="left:48px;top:13px;font-size:16.300px">保存する</span></div>
</div>
<div class="a" style="left:1px;top:0;width:1440px;height:1px;background:#1c1f2b"></div>
<div class="a" style="left:0;top:0;width:1px;height:751px;background:#807e80"></div>
<div class="a" style="left:1441px;top:0;width:1px;height:751px;background:#807e80"></div>
</body></html>
